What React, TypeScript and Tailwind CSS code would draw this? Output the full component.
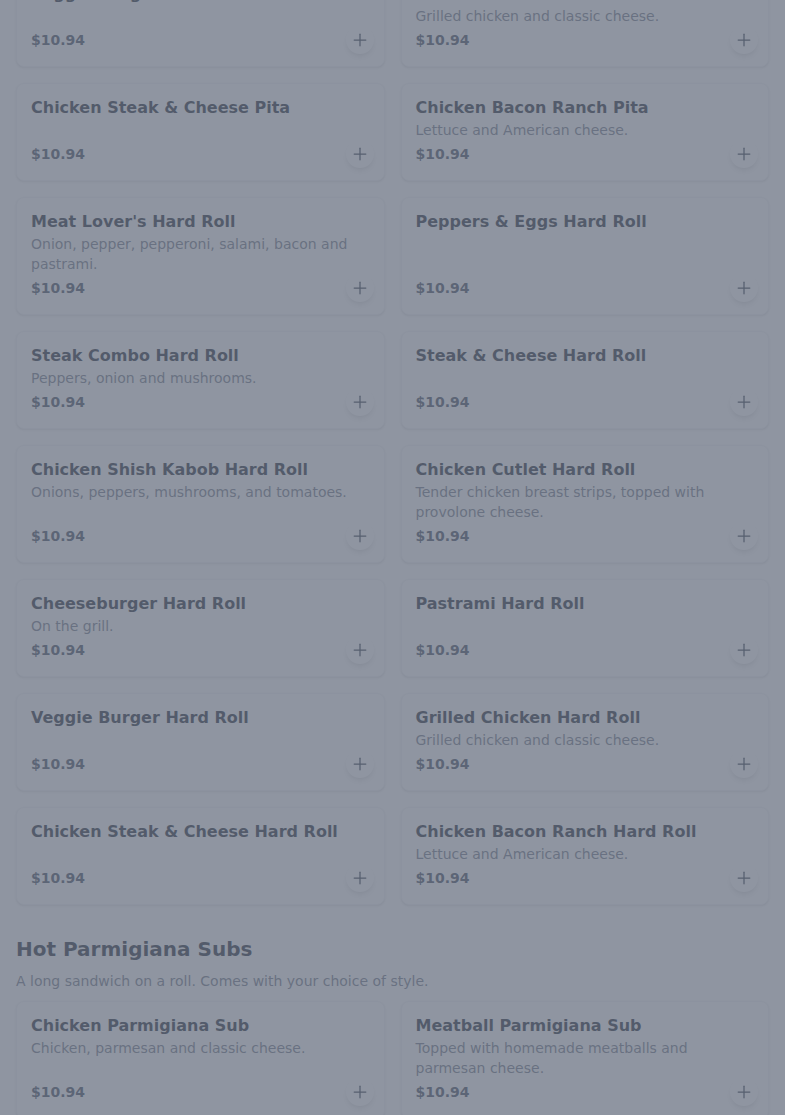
import { Plus } from 'lucide-react';

type Item = { name: string; desc?: string; price: string };

const PITAS_AND_ROLLS: Item[] = [
  { name: 'Veggie Burger Pita', price: '$10.94' },
  { name: 'Grilled Chicken Pita', desc: 'Grilled chicken and classic cheese.', price: '$10.94' },
  { name: 'Chicken Steak & Cheese Pita', price: '$10.94' },
  { name: 'Chicken Bacon Ranch Pita', desc: 'Lettuce and American cheese.', price: '$10.94' },
  { name: "Meat Lover's Hard Roll", desc: 'Onion, pepper, pepperoni, salami, bacon and pastrami.', price: '$10.94' },
  { name: 'Peppers & Eggs Hard Roll', price: '$10.94' },
  { name: 'Steak Combo Hard Roll', desc: 'Peppers, onion and mushrooms.', price: '$10.94' },
  { name: 'Steak & Cheese Hard Roll', price: '$10.94' },
  { name: 'Chicken Shish Kabob Hard Roll', desc: 'Onions, peppers, mushrooms, and tomatoes.', price: '$10.94' },
  { name: 'Chicken Cutlet Hard Roll', desc: 'Tender chicken breast strips, topped with provolone cheese.', price: '$10.94' },
  { name: 'Cheeseburger Hard Roll', desc: 'On the grill.', price: '$10.94' },
  { name: 'Pastrami Hard Roll', price: '$10.94' },
  { name: 'Veggie Burger Hard Roll', price: '$10.94' },
  { name: 'Grilled Chicken Hard Roll', desc: 'Grilled chicken and classic cheese.', price: '$10.94' },
  { name: 'Chicken Steak & Cheese Hard Roll', price: '$10.94' },
  { name: 'Chicken Bacon Ranch Hard Roll', desc: 'Lettuce and American cheese.', price: '$10.94' },
];

const PARM_SUBS: Item[] = [
  { name: 'Chicken Parmigiana Sub', desc: 'Chicken, parmesan and classic cheese.', price: '$10.94' },
  { name: 'Meatball Parmigiana Sub', desc: 'Topped with homemade meatballs and parmesan cheese.', price: '$10.94' },
  { name: 'Eggplant Parmigiana Sub', desc: 'Breaded eggplant, marinara and mozzarella.', price: '$10.94' },
  { name: 'Sausage Parmigiana Sub', desc: 'Italian sausage, marinara and mozzarella.', price: '$10.94' },
];

function ItemCard({ item }: { item: Item }) {
  return (
    <div className="flex flex-col rounded-lg border border-gray-100 bg-white py-3 pl-[14px] pr-[10px] shadow-sm">
      <h3 className="text-base leading-6 font-bold text-gray-900">{item.name}</h3>
      {item.desc && <p className="text-sm leading-5 text-gray-500">{item.desc}</p>}
      <div className="mt-auto flex items-center justify-between">
        <span className="text-sm leading-5 font-bold text-gray-700">{item.price}</span>
        <button className="flex h-7 w-7 items-center justify-center rounded-full bg-white text-gray-800 shadow-md">
          <Plus size={20} strokeWidth={1.5} />
        </button>
      </div>
    </div>
  );
}

export default function App() {
  return (
    <div className="relative h-[1115px] overflow-hidden bg-white" style={{ fontFamily: '"DejaVu Sans", sans-serif' }}>
      <div className="-mt-[31px] px-4">
        <div className="grid grid-cols-2 gap-4">
          {PITAS_AND_ROLLS.map(it => <ItemCard key={it.name} item={it} />)}
        </div>

        {/* next category */}
        <section className="mt-[30px]">
          <h2 className="text-xl leading-7 font-bold text-gray-900">Hot Parmigiana Subs</h2>
          <p className="mt-2 text-sm leading-5 text-gray-500">A long sandwich on a roll. Comes with your choice of style.</p>
          <div className="mt-2.5 grid grid-cols-2 gap-4">
            {PARM_SUBS.map(it => <ItemCard key={it.name} item={it} />)}
          </div>
        </section>
      </div>

      {/* modal backdrop */}
      <div className="fixed inset-0 bg-gray-500/75" />
    </div>
  );
}
